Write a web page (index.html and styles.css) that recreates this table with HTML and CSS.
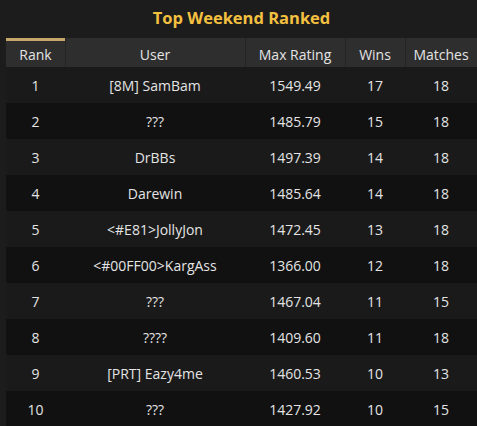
FILE: index.html
```html
<!DOCTYPE html>
<html lang="en">
<head>
    <meta charset="UTF-8">
    <meta name="viewport" content="width=device-width, initial-scale=1.0">
    <title>Top Weekend Ranked</title>
    <link rel="stylesheet" href="styles.css">
</head>
<body>
    <div class="board">
        <h2 class="board-title">Top Weekend Ranked</h2>
        <table class="ranking">
            <colgroup>
                <col class="col-rank">
                <col class="col-user">
                <col class="col-rating">
                <col class="col-wins">
                <col class="col-matches">
            </colgroup>
            <thead>
                <tr>
                    <th class="sorted">Rank</th>
                    <th>User</th>
                    <th>Max Rating</th>
                    <th>Wins</th>
                    <th>Matches</th>
                </tr>
            </thead>
            <tbody>
                <tr><td>1</td><td>[8M] SamBam</td><td>1549.49</td><td>17</td><td>18</td></tr>
                <tr><td>2</td><td>???</td><td>1485.79</td><td>15</td><td>18</td></tr>
                <tr><td>3</td><td>DrBBs</td><td>1497.39</td><td>14</td><td>18</td></tr>
                <tr><td>4</td><td>Darewin</td><td>1485.64</td><td>14</td><td>18</td></tr>
                <tr><td>5</td><td>&lt;#E81&gt;JollyJon</td><td>1472.45</td><td>13</td><td>18</td></tr>
                <tr><td>6</td><td>&lt;#00FF00&gt;KargAss</td><td>1366.00</td><td>12</td><td>18</td></tr>
                <tr><td>7</td><td>???</td><td>1467.04</td><td>11</td><td>15</td></tr>
                <tr><td>8</td><td>????</td><td>1409.60</td><td>11</td><td>18</td></tr>
                <tr><td>9</td><td>[PRT] Eazy4me</td><td>1460.53</td><td>10</td><td>13</td></tr>
                <tr><td>10</td><td>???</td><td>1427.92</td><td>10</td><td>15</td></tr>
            </tbody>
        </table>
    </div>
</body>
</html>
```

FILE: styles.css
```css
html, body {
    margin: 0;
    padding: 0;
    background: #1c1c1c;
}
body {
    font-family: "Open Sans", "Noto Sans", sans-serif;
    color: #e4e4e4;
    overflow: hidden;
}
.board {
    padding-left: 6px;
}
.board-title {
    margin: 0;
    height: 38px;
    line-height: 36px;
    text-align: center;
    font-size: 16.5px;
    font-weight: bold;
    color: #f4c040;
}
.ranking {
    width: 471px;
    border-collapse: collapse;
    border-spacing: 0;
    table-layout: fixed;
    font-size: 14px;
}
.col-rank { width: 59px; }
.col-user { width: 180px; }
.col-rating { width: 100px; }
.col-wins { width: 60px; }
.col-matches { width: 72px; }
.ranking th {
    height: 29px;
    padding: 3px 0 0;
    box-sizing: border-box;
    background: #2e2e2e;
    box-shadow: inset 1px 0 #242424;
    font-weight: normal;
    color: #e4e4e4;
}
.ranking th:first-child {
    box-shadow: none;
}
.ranking th.sorted {
    box-shadow: inset 0 3px #c8a86a;
}
.ranking td {
    height: 36px;
    padding: 0;
    text-align: center;
}
.ranking tbody tr:nth-child(odd) {
    background: #1a1a1a;
}
.ranking tbody tr:nth-child(even) {
    background: #111111;
}
```
